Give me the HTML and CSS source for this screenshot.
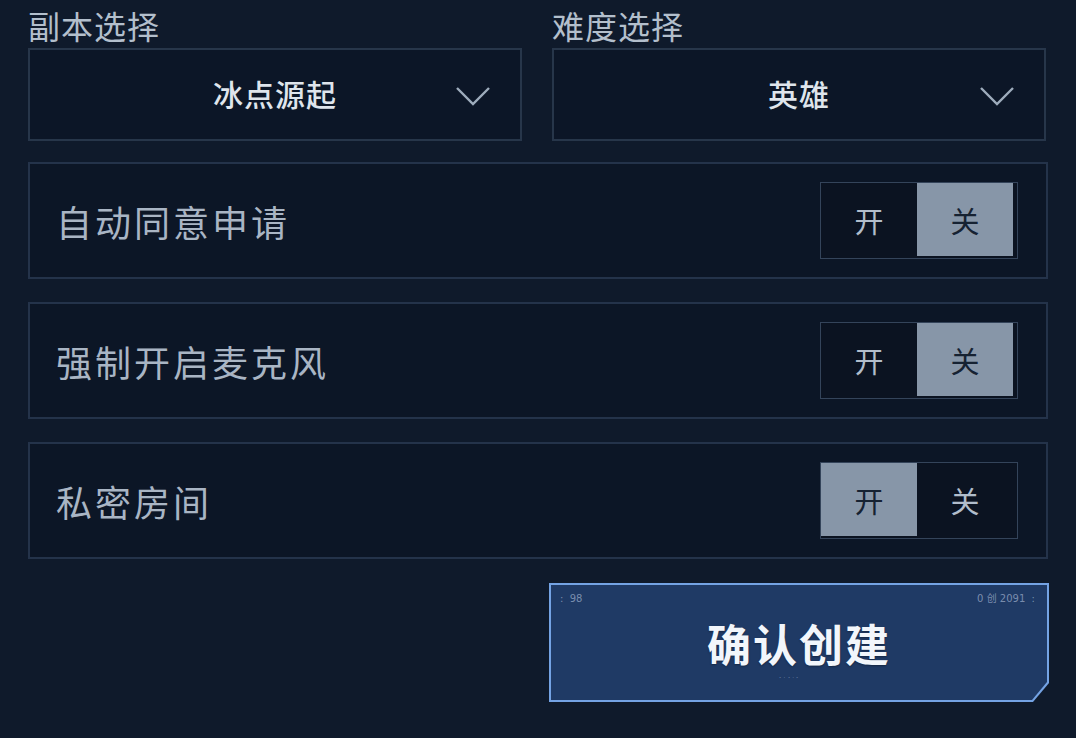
FILE: index.html
```html
<!DOCTYPE html>
<html lang="zh-CN">
<head>
  <meta charset="UTF-8">
  <meta name="viewport" content="width=device-width, initial-scale=1.0">
  <title>创建房间</title>
  <link rel="stylesheet" href="styles.css">
</head>
<body>
  <div class="room">
    <div class="room__selects">
      <div class="field">
        <div class="field__label">副本选择</div>
        <div class="select">
          <span></span>
          <span class="select__value">冰点源起</span>
          <svg class="select__arrow" width="36" height="22" viewBox="0 0 36 22">
            <polyline points="2,3 18,19 34,3" fill="none" stroke="#9eacbc" stroke-width="2.4"/>
          </svg>
        </div>
      </div>
      <div class="field">
        <div class="field__label">难度选择</div>
        <div class="select">
          <span></span>
          <span class="select__value">英雄</span>
          <svg class="select__arrow" width="36" height="22" viewBox="0 0 36 22">
            <polyline points="2,3 18,19 34,3" fill="none" stroke="#9eacbc" stroke-width="2.4"/>
          </svg>
        </div>
      </div>
    </div>

    <div class="option">
      <span class="option__text">自动同意申请</span>
      <div class="switch">
        <span class="switch__item">开</span>
        <span class="switch__item" selected="selected">关</span>
      </div>
    </div>
    <div class="option">
      <span class="option__text">强制开启麦克风</span>
      <div class="switch">
        <span class="switch__item">开</span>
        <span class="switch__item" selected="selected">关</span>
      </div>
    </div>
    <div class="option">
      <span class="option__text">私密房间</span>
      <div class="switch">
        <span class="switch__item" selected="selected">开</span>
        <span class="switch__item">关</span>
      </div>
    </div>

    <div class="create-btn">
      <div class="create-btn__face">
        <span class="create-btn__deco create-btn__deco--tl">:&nbsp;&nbsp;98</span>
        <span class="create-btn__deco create-btn__deco--tr">0 创 2091&nbsp;&nbsp;:</span>
        <span class="create-btn__deco create-btn__deco--bc">ꞏ · ꞏ · ꞏ</span>
        <span class="create-btn__text">确认创建</span>
      </div>
    </div>
  </div>
</body>
</html>
```

FILE: styles.css
```css
/* 房间创建 */
html, body {
  margin: 0;
  height: 100%;
}
body {
  background: #0f1a2b;
  font-family: "Noto Sans CJK SC", "Noto Sans", sans-serif;
  overflow: hidden;
}
.room {
  width: 1020px;
  margin-left: 28px;
  display: flex;
  flex-direction: column;
}
.room__selects {
  display: grid;
  grid-template-columns: 494px 494px;
  gap: 30px;
}
.field__label {
  margin-top: 5px;
  height: 43px;
  line-height: 40px;
  font-size: 32px;
  letter-spacing: 1px;
  color: #b3bfcc;
}
.select {
  box-sizing: border-box;
  height: 93px;
  border: 2px solid #27364a;
  background: #0c1627;
  display: grid;
  grid-template-columns: 1fr auto 1fr;
  align-items: center;
}
.select__value {
  font-size: 30px;
  font-weight: 500;
  line-height: 1;
  margin-bottom: 4px;
  letter-spacing: 1px;
  color: #dfe5ec;
}
.select__arrow {
  justify-self: end;
  margin-right: 29px;
  margin-top: 2px;
}

.option {
  box-sizing: border-box;
  height: 117px;
  margin-top: 21px;
  padding: 0 28px 0 26px;
  border: 2px solid #24334a;
  background: #0c1626;
  display: flex;
  justify-content: space-between;
  align-items: center;
}
.option + .option {
  margin-top: 23px;
}
.option__text {
  font-size: 36px;
  letter-spacing: 3px;
  color: #a9b5c4;
}
.switch {
  display: flex;
  padding: 0 4px 2px 0;
  border: 1px solid #34445a;
  background: #0b1321;
}
.switch__item {
  width: 96px;
  height: 73px;
  display: flex;
  align-items: center;
  justify-content: center;
  font-size: 29px;
  color: #b1bdcb;
}
.switch__item[selected=selected] {
  background: #8796a8;
  color: #162232;
}

/* 确认按钮 */
.create-btn {
  align-self: flex-end;
  margin-right: -1px;
  margin-top: 24px;
  width: 500px;
  height: 119px;
  padding: 2px;
  box-sizing: border-box;
  background: #74a3e4;
  clip-path: polygon(0 0, 100% 0, 100% calc(100% - 19px), calc(100% - 16px) 100%, 0 100%);
}
.create-btn__face {
  position: relative;
  height: 100%;
  background: #1f3a65;
  display: flex;
  align-items: center;
  justify-content: center;
  clip-path: polygon(0 0, 100% 0, 100% calc(100% - 18px), calc(100% - 15px) 100%, 0 100%);
}
.create-btn__text {
  font-size: 44px;
  font-weight: 700;
  line-height: 1;
  letter-spacing: 2px;
  color: #f2f6fb;
  text-shadow: 0 1px 2px rgba(0, 0, 0, 0.35);
}
.create-btn__deco {
  position: absolute;
  font-family: "DejaVu Sans", "Noto Sans CJK SC", sans-serif;
  font-size: 10px;
  line-height: 1;
  color: rgba(200, 214, 235, 0.55);
}
.create-btn__deco--tl {
  top: 9px;
  left: 9px;
}
.create-btn__deco--tr {
  top: 9px;
  right: 12px;
}
.create-btn__deco--bc {
  bottom: 18px;
  left: 228px;
  font-size: 7px;
  color: rgba(200, 214, 235, 0.35);
}
```
